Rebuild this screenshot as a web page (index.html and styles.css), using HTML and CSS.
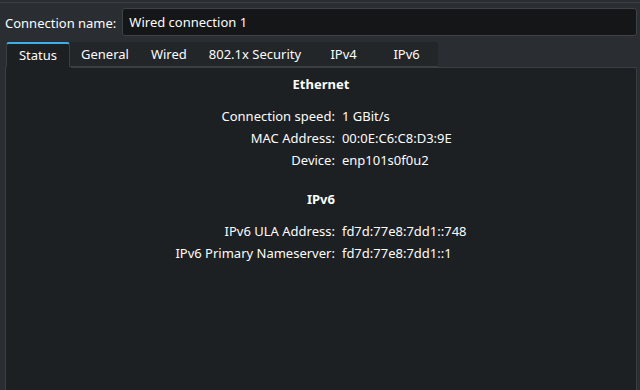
FILE: index.html
```html
<!DOCTYPE html>
<html lang="en">
<head>
    <meta charset="UTF-8">
    <meta name="viewport" content="width=device-width, initial-scale=1.0">
    <title>Wired connection 1</title>
    <link rel="stylesheet" href="styles.css">
</head>
<body>
    <div class="toolbar-edge"></div>

    <div class="name-row">
        <label for="connName">Connection name:</label>
        <input type="text" id="connName" value="Wired connection 1">
    </div>

    <div class="tabs">
        <div class="tab active">Status</div>
        <div class="tab-strip">
            <div class="tab">General</div>
            <div class="tab">Wired</div>
            <div class="tab">802.1x Security</div>
            <div class="tab short">IPv4</div>
            <div class="tab short">IPv6</div>
        </div>
    </div>

    <div class="panel">
        <div class="details">
            <div class="section-title">Ethernet</div>
            <div class="key">Connection speed:</div>
            <div class="value">1 GBit/s</div>
            <div class="key">MAC Address:</div>
            <div class="value">00:0E:C6:C8:D3:9E</div>
            <div class="key">Device:</div>
            <div class="value">enp101s0f0u2</div>

            <div class="section-title second">IPv6</div>
            <div class="key">IPv6 ULA Address:</div>
            <div class="value">fd7d:77e8:7dd1::748</div>
            <div class="key">IPv6 Primary Nameserver:</div>
            <div class="value">fd7d:77e8:7dd1::1</div>
        </div>
    </div>
</body>
</html>
```

FILE: styles.css
```css
html, body {
    margin: 0;
    height: 100%;
    overflow: hidden;
}
body {
    font-family: "Noto Sans", "Open Sans", sans-serif;
    font-size: 13px;
    color: #fcfcfc;
    background-color: #2a2e32;
}
.toolbar-edge {
    height: 2px;
    border-bottom: 1px solid #3a3f44;
}
.name-row {
    display: flex;
    align-items: center;
    gap: 6px;
    margin: 5px 3px 0 5px;
}
.name-row label {
    padding-top: 2px;
}
.name-row input {
    flex: 1;
    height: 28px;
    box-sizing: border-box;
    padding: 0 6px;
    border: 1px solid #3e4348;
    border-radius: 3px;
    background-color: #141618;
    color: #fcfcfc;
    font-family: inherit;
    font-size: 13px;
    outline: none;
}
.tabs {
    display: flex;
    margin: 6px 0 0 6px;
    height: 25px;
}
.tab-strip {
    display: flex;
    background-color: #232629;
    border-top-right-radius: 3px;
    border-bottom: 1px solid #3a3f44;
    box-sizing: border-box;
}
.tab {
    box-sizing: border-box;
    padding: 0 11px;
    text-align: center;
    line-height: 25px;
}
.tab.short {
    min-width: 63px;
}
.tab.active {
    width: 64px;
    background-color: #1d2023;
    border-top: 2px solid #3daee9;
    border-left: 1px solid #3a3f44;
    border-right: 1px solid #3a3f44;
    border-radius: 3px 3px 0 0;
    line-height: 23px;
}
.panel {
    margin: 0 3px 0 5px;
    height: 340px;
    background-color: #1d2023;
    border: 1px solid #3a3f44;
    border-top: none;
    border-top-right-radius: 3px;
    position: relative;
}
.panel::before {
    content: "";
    position: absolute;
    top: 0;
    left: 65px;
    right: -1px;
    border-top: 1px solid #3a3f44;
    border-top-right-radius: 3px;
}
.details {
    display: grid;
    grid-template-columns: auto auto;
    justify-content: center;
    column-gap: 7px;
    padding-top: 6px;
    line-height: 22px;
}
.section-title {
    grid-column: 1 / -1;
    text-align: center;
    font-weight: bold;
    margin-bottom: 10px;
}
.section-title.second {
    margin-top: 17px;
}
.key {
    text-align: right;
}
```
